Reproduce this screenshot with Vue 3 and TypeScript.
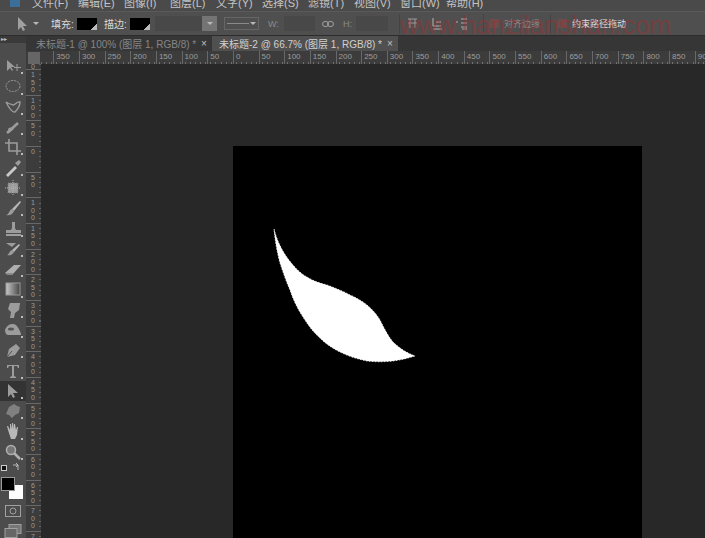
<template>
  <div class="ps">
    <div class="menubar">
      <div class="logo"></div>
      <span v-for="m in menus" :key="m" class="menu">{{ m }}</span>
    </div>

    <div class="options">
      <svg class="opt-arrow" width="12" height="16" viewBox="0 0 12 16"><path d="M2 1v13l3-3 2 4 2-1-2-4h4z" fill="#a0a0a0" /></svg>
      <i class="caret caret-tool"></i>
      <span class="lbl lbl-fill">填充:</span>
      <i class="swatch"></i>
      <span class="lbl lbl-stroke">描边:</span>
      <i class="swatch"></i>
      <div class="field field-size"></div>
      <div class="drop"><i class="caret"></i></div>
      <div class="line-style"><b></b><i class="caret"></i></div>
      <span class="lbl dim lbl-w">W:</span>
      <div class="field field-w"></div>
      <svg class="link" width="12" height="8" viewBox="0 0 12 8"><rect x="0.5" y="1.5" width="6" height="5" rx="2.5" fill="none" stroke="#a0a0a0" /><rect x="5.5" y="1.5" width="6" height="5" rx="2.5" fill="none" stroke="#a0a0a0" /></svg>
      <span class="lbl dim lbl-h">H:</span>
      <div class="field field-h"></div>
      <i class="sep sep-a"></i>
      <div class="path-ops">
        <svg width="12" height="14" viewBox="0 0 12 14"><path d="M1 2h9M1 6h9M3 2v9M8 2v9" stroke="#9a9a9a" fill="none" /></svg>
        <svg width="12" height="14" viewBox="0 0 12 14"><path d="M2 1v8h8M2 12h9M5 5h5" stroke="#b5b5b5" fill="none" /></svg>
        <svg width="14" height="14" viewBox="0 0 14 14"><path d="M1 5h2M6 2h6M6 6h6M6 10h6M7 12h5" stroke="#b0b0b0" fill="none" /></svg>
      </div>
      <i class="sep sep-b"></i>
      <i class="check check-a"></i>
      <span class="lbl dim">对齐边缘</span>
      <i class="sep sep-c"></i>
      <i class="check"></i>
      <span class="lbl bright">约束路径拖动</span>
      <div class="watermark">www.hanzilanshan.com</div>
    </div>

    <div class="main">
      <div class="toolbar">
        <div class="tool-head">▸▸</div>
        <div v-for="t in tools" :key="t.name" class="tool" :class="{ on: t.name === 'direct' }">
          <svg width="18" height="18" viewBox="0 0 18 18" v-html="t.svg"></svg>
        </div>
        <div class="mini-colors">
          <i class="mini-fg"></i>
          <svg width="9" height="9" viewBox="0 0 9 9"><path d="M1 2h5v5M4 0 6 2 4 4" fill="none" stroke="#b8b8b8" /></svg>
        </div>
        <div class="colors"><i class="bg"></i><i class="fg"></i></div>
        <div class="tool mask"><svg width="16" height="12" viewBox="0 0 16 12"><rect x="0.5" y="0.5" width="15" height="11" fill="none" stroke="#a0a0a0" /><circle cx="8" cy="6" r="3" fill="none" stroke="#a0a0a0" /></svg></div>
        <div class="tool"><svg width="18" height="14" viewBox="0 0 18 14"><rect x="5" y="0.5" width="12" height="9" fill="#777" stroke="#a0a0a0" /><rect x="1" y="4.5" width="12" height="9" fill="#666" stroke="#a0a0a0" /></svg></div>
      </div>

      <div class="work">
        <div class="tabs">
          <div class="tab">
            <span class="tab-title">未标题-1 @ 100% (图层 1, RGB/8) *</span><span class="close">×</span>
          </div>
          <div class="tab active">
            <span class="tab-title">未标题-2 @ 66.7% (图层 1, RGB/8) *</span><span class="close">×</span>
          </div>
        </div>

        <div class="hruler">
          <div class="corner"></div>
          <div class="h-scale">
            <span v-for="n in hLabels" :key="n.key" class="h-cell">{{ n.text }}</span>
          </div>
        </div>

        <div class="area">
          <div class="vruler">
            <div class="v-first">0</div>
            <div v-for="n in vLabels" :key="n.key" class="v-cell">
              <span v-for="(d, i) in n.digits" :key="i">{{ d }}</span>
            </div>
          </div>
          <div class="canvas">
            <div class="doc">
              <svg width="409" height="392" viewBox="233 146 409 392">
                <path
                  d="M274 229C277 241 283 254 293 265C298 271 303 275 307 277C313 281 320 283 327 285C335 288 343 291 350 295C357 298 362 301 367 305C373 310 377 315 380 320C384 328 388 336 393 342C399 348 407 353 415 356C408 358 401 360 393 361C384 362 375 362 367 361C357 359 348 356 340 352C332 348 326 344 320 338C313 332 308 325 303 317C297 308 293 299 290 290C286 281 283 272 280 263C277 252 275 240 274 229Z"
                  fill="#fff"
                  stroke="#fff"
                  stroke-width="0.8"
                  stroke-dasharray="1.5 1.5"
                />
              </svg>
            </div>
          </div>
        </div>
      </div>
    </div>
  </div>
</template>

<script setup lang="ts">
const menus = [
  "文件(F)",
  "编辑(E)",
  "图像(I)",
  "图层(L)",
  "文字(Y)",
  "选择(S)",
  "滤镜(T)",
  "视图(V)",
  "窗口(W)",
  "帮助(H)",
];

const hLabels = [350, 300, 250, 200, 150, 100, 50, 0, 50, 100, 150, 200, 250, 300, 350, 400, 450, 500, 550, 600, 650, 700, 750, 800, 850, 900].map(
  (n, i) => ({ key: i, text: String(n) })
);

const vLabels = [150, 100, 50, 0, 50, 100, 150, 200, 250, 300, 350, 400, 450, 500, 550, 600, 650, 700, 750].map(
  (n, i) => ({ key: i, digits: String(n).split("") })
);

const c = "#9c9c9c";
const tools = [
  { name: "move", svg: `<path d="M3 3v11l3-3 2 3 1-1-2-3h4z" fill="${c}"/><path d="M13 7v7M10 10.5h7" stroke="${c}"/>` },
  { name: "marquee", svg: `<ellipse cx="9" cy="9" rx="7" ry="5.5" fill="none" stroke="${c}" stroke-dasharray="2 1"/>` },
  { name: "lasso", svg: `<path d="M2 4c4 3 6 2 7 3s4-4 7-3c0 4-3 8-5 10-3 1-7-6-9-10z" fill="none" stroke="${c}" stroke-width="1.4"/>` },
  { name: "wand", svg: `<path d="M3 15 14 5" stroke="${c}" stroke-width="2.5"/><path d="M4 11c3-3 5-1 6 0l-5 4z" fill="${c}"/>` },
  { name: "crop", svg: `<path d="M5 1v12h12M1 5h12v12" fill="none" stroke="${c}" stroke-width="1.6"/>` },
  { name: "dropper", svg: `<path d="M2 16 11 7l2 2-9 9z" fill="#c8c8c8"/><path d="M11 4l4-3 2 2-3 4z" fill="${c}"/>` },
  { name: "heal", svg: `<rect x="4" y="4" width="10" height="10" fill="${c}" stroke="#7a7a7a" stroke-dasharray="1 1"/><path d="M1 9h16M9 1v16" stroke="#b4b4b4" stroke-dasharray="1 1"/>` },
  { name: "brush", svg: `<path d="M8 10 16 2l1 1-7 9z" fill="#b8b8b8"/><path d="M2 16c3 0 3-5 6-6l2 2c-1 3-4 5-8 4z" fill="${c}"/>` },
  { name: "stamp", svg: `<path d="M8 2h3v6l1 2h5v3H2v-3h5l1-2z" fill="${c}"/><path d="M2 15h15" stroke="#b8b8b8" stroke-width="1.5"/>` },
  { name: "history", svg: `<path d="M2 3h10l-4 4z" fill="${c}"/><path d="M8 10 15 4l1 1-6 7z" fill="#b8b8b8"/><path d="M3 15c2 0 2-4 5-5l2 2c-1 2-3 4-7 3z" fill="${c}"/>` },
  { name: "eraser", svg: `<path d="M1 13 10 5h7l-8 9H4z" fill="#aeaeae"/><path d="M1 13h8v2H3z" fill="#888"/>` },
  { name: "gradient", svg: `<defs><linearGradient id="gr"><stop offset="0" stop-color="#c8c8c8"/><stop offset="1" stop-color="#444"/></linearGradient></defs><rect x="2" y="3" width="14" height="12" fill="url(#gr)" stroke="#999"/>` },
  { name: "smudge", svg: `<path d="M6 2h10l-1 7-4 3-1 5H6l1-6-3-3z" fill="${c}"/>` },
  { name: "dodge", svg: `<path d="M1 9c2-6 8-7 11-5 2 2 5 7 5 10H4c-2 0-3-3-3-5z" fill="${c}"/><ellipse cx="7" cy="8" rx="3" ry="1.5" fill="#555"/>` },
  { name: "pen", svg: `<path d="M3 16 5 8l7-5 4 4-5 7z" fill="${c}"/><path d="M3 16 8 10" stroke="#555"/>` },
  { name: "type", svg: `<path d="M3 3h12v3h-1l-1-2h-3v10l2 1v1H6v-1l2-1V4H5L4 6H3z" fill="${c}"/>` },
  { name: "direct", svg: `<path d="M4 2v13l3-3 2 4 2-1-2-4h5z" fill="${c}"/>` },
  { name: "shape", svg: `<path d="M2 12 5 5l5-3 3 2 3 1-1 6-4 2-3 3-3-3z" fill="#808080"/>` },
  { name: "hand", svg: `<path d="M4 8 3 4h1l2 4V2h1l1 5V1h1l1 6V2h1l1 6 1-3h1l-1 8-2 4H7z" fill="#b8b8b8"/>` },
  { name: "zoom", svg: `<circle cx="7" cy="7" r="4.5" fill="#777" stroke="#b0b0b0" stroke-width="1.5"/><path d="M10 10l6 6" stroke="#b0b0b0" stroke-width="2.5"/>` },
];
</script>

<style scoped>
.ps {
  width: 705px;
  height: 538px;
  overflow: hidden;
  display: flex;
  flex-direction: column;
  background: #282828;
  font-family: "Liberation Sans", "Noto Sans CJK SC", sans-serif;
  color: #c8c8c8;
}

.menubar {
  height: 11px;
  flex: none;
  background: #4a4a4a;
  display: flex;
  align-items: flex-end;
  overflow: hidden;
  padding-left: 32px;
  gap: 14px;
  position: relative;
}
.logo {
  position: absolute;
  left: 10px;
  top: 0;
  width: 10px;
  height: 7px;
  background: #3b6f9a;
}
.menu {
  width: 32px;
  flex: none;
  font-size: 11px;
  line-height: 14px;
  white-space: nowrap;
  margin-bottom: 1px;
  color: #c4c4c4;
}

.options {
  height: 24px;
  flex: none;
  background: #4f4f4f;
  border-top: 1px solid #5a5a5a;
  display: flex;
  align-items: center;
  padding-left: 16px;
  position: relative;
  box-sizing: border-box;
}
.opt-arrow {
  flex: none;
}
.caret {
  width: 0;
  height: 0;
  border: 3px solid transparent;
  border-top-color: #b8b8b8;
  border-bottom: 0;
  display: block;
  flex: none;
}
.caret-tool {
  margin: 0 0 0 5px;
}
.lbl {
  font-size: 9px;
  white-space: nowrap;
  color: #dadada;
}
.lbl-fill {
  margin-left: 12px;
  width: 26px;
  font-size: 10px;
}
.lbl-stroke {
  margin-left: 7px;
  width: 26px;
  font-size: 10px;
}
.dim {
  color: #8a8a8a;
}
.bright {
  color: #e0e0e0;
}
.swatch {
  width: 20px;
  height: 12px;
  background: linear-gradient(135deg, #000 80%, #bbb 80%);
  flex: none;
}
.field {
  height: 15px;
  background: #484848;
  flex: none;
}
.field-size {
  width: 47px;
  margin-left: 5px;
}
.drop {
  width: 15px;
  height: 15px;
  background: #747474;
  display: flex;
  align-items: center;
  justify-content: center;
  flex: none;
}
.line-style {
  width: 35px;
  height: 13px;
  margin-left: 7px;
  border: 1px solid #666;
  display: flex;
  align-items: center;
  gap: 1px;
  padding: 0 2px;
  box-sizing: border-box;
  flex: none;
}
.line-style b {
  flex: 1;
  border-top: 1px solid #8a8a8a;
}
.lbl-w {
  margin-left: 9px;
  width: 16px;
}
.field-w {
  width: 31px;
}
.link {
  margin-left: 7px;
  flex: none;
}
.lbl-h {
  margin-left: 9px;
  width: 13px;
}
.field-h {
  width: 32px;
}
.sep {
  width: 1px;
  height: 20px;
  background: #444;
  flex: none;
}
.sep-a {
  margin-left: 11px;
}
.path-ops {
  display: flex;
  align-items: center;
  gap: 12px;
  margin-left: 7px;
  flex: none;
}
.sep-b {
  margin-left: 14px;
}
.check {
  width: 9px;
  height: 9px;
  background: #6b4d4d;
  flex: none;
  margin-right: 5px;
}
.check-a {
  margin-left: 6px;
}
.sep-c {
  margin: 0 7px 0 10px;
}
.watermark {
  position: absolute;
  left: 400px;
  top: -2px;
  font-size: 26px;
  color: rgba(175, 40, 40, 0.38);
  white-space: nowrap;
  pointer-events: none;
}

.main {
  flex: 1;
  display: flex;
  min-height: 0;
  border-top: 1px solid #2c2c2c;
}
.toolbar {
  width: 26px;
  flex: none;
  background: #4c4c4c;
  display: flex;
  flex-direction: column;
  align-items: center;
  overflow: hidden;
}
.tool-head {
  width: 100%;
  height: 7px;
  background: #3a3a3a;
  font-size: 6px;
  line-height: 7px;
  color: #c4c4c4;
  padding-left: 1px;
  margin-bottom: 13px;
  flex: none;
}
.tool {
  width: 100%;
  height: 20.3px;
  display: flex;
  align-items: center;
  justify-content: center;
  flex: none;
  position: relative;
}
.tool::after {
  content: "";
  position: absolute;
  right: 3px;
  bottom: 2px;
  width: 2px;
  height: 2px;
  background: #bbb;
}
.tool.on {
  background: #333;
}
.mini-colors {
  width: 100%;
  height: 12px;
  display: flex;
  align-items: center;
  justify-content: space-between;
  padding: 0 5px 0 1px;
  box-sizing: border-box;
  flex: none;
}
.mini-fg {
  width: 6px;
  height: 6px;
  background: #111;
  border: 1px solid #ccc;
  box-sizing: border-box;
}
.colors {
  width: 22px;
  height: 22px;
  margin: 3px 0 2px 1px;
  align-self: flex-start;
  display: grid;
  flex: none;
}
.colors i {
  grid-area: 1 / 1;
  width: 14px;
  height: 14px;
}
.colors .bg {
  background: #fff;
  justify-self: end;
  align-self: end;
}
.colors .fg {
  background: #000;
  border: 1px solid #999;
  box-sizing: border-box;
}
.mask::after {
  display: none;
}

.work {
  flex: 1;
  min-width: 0;
  display: flex;
  flex-direction: column;
}
.tabs {
  height: 15px;
  flex: none;
  background: #363636;
  display: flex;
}
.tab {
  width: 186px;
  display: flex;
  align-items: center;
  padding-left: 10px;
  box-sizing: border-box;
  font-size: 10px;
  color: #868686;
  white-space: nowrap;
}
.tab.active {
  background: #505050;
  color: #d0d0d0;
  padding-left: 7px;
}
.tab-title {
  width: 165px;
  flex: none;
}
.tab.active .tab-title {
  width: 168px;
}
.close {
  font-size: 10px;
  color: #c0c0c0;
}

.hruler {
  height: 13px;
  flex: none;
  display: flex;
  background: #3c3c3c;
}
.corner {
  width: 15px;
  flex: none;
  padding: 1px 0 0 2px;
  box-sizing: border-box;
}
.corner::before {
  content: "";
  display: block;
  width: 12px;
  height: 12px;
  background: #666;
}
.h-scale {
  flex: 1;
  display: flex;
  padding-left: 12.3px;
  overflow: hidden;
  background: repeating-linear-gradient(90deg, #707070 0 1px, transparent 1px 5.13px) 0 100% / 100% 2px no-repeat;
}
.h-cell {
  width: 25.67px;
  flex: none;
  box-sizing: border-box;
  border-left: 1px solid #686868;
  font-size: 8px;
  line-height: 11px;
  padding-left: 2px;
  color: #9c9c9c;
}

.area {
  flex: 1;
  min-height: 0;
  display: flex;
}
.vruler {
  width: 15px;
  flex: none;
  background: #3c3c3c repeating-linear-gradient(180deg, #666 0 1px, transparent 1px 5.13px) 100% 0 / 2px 100% no-repeat;
  overflow: hidden;
}
.v-first {
  height: 5px;
  font-size: 7px;
  line-height: 5px;
  padding-left: 5px;
  color: #9c9c9c;
  overflow: hidden;
}
.v-cell {
  height: 25.67px;
  box-sizing: border-box;
  border-top: 1px solid #686868;
  padding: 1px 0 0 5px;
  display: flex;
  flex-direction: column;
  font-size: 7px;
  line-height: 7.5px;
  color: #9c9c9c;
}
.canvas {
  flex: 1;
  min-width: 0;
  background: #282828;
  overflow: hidden;
  padding: 82px 0 0 192px;
}
.doc {
  width: 409px;
  height: 392px;
  background: #000;
}
.doc svg {
  display: block;
}
</style>
